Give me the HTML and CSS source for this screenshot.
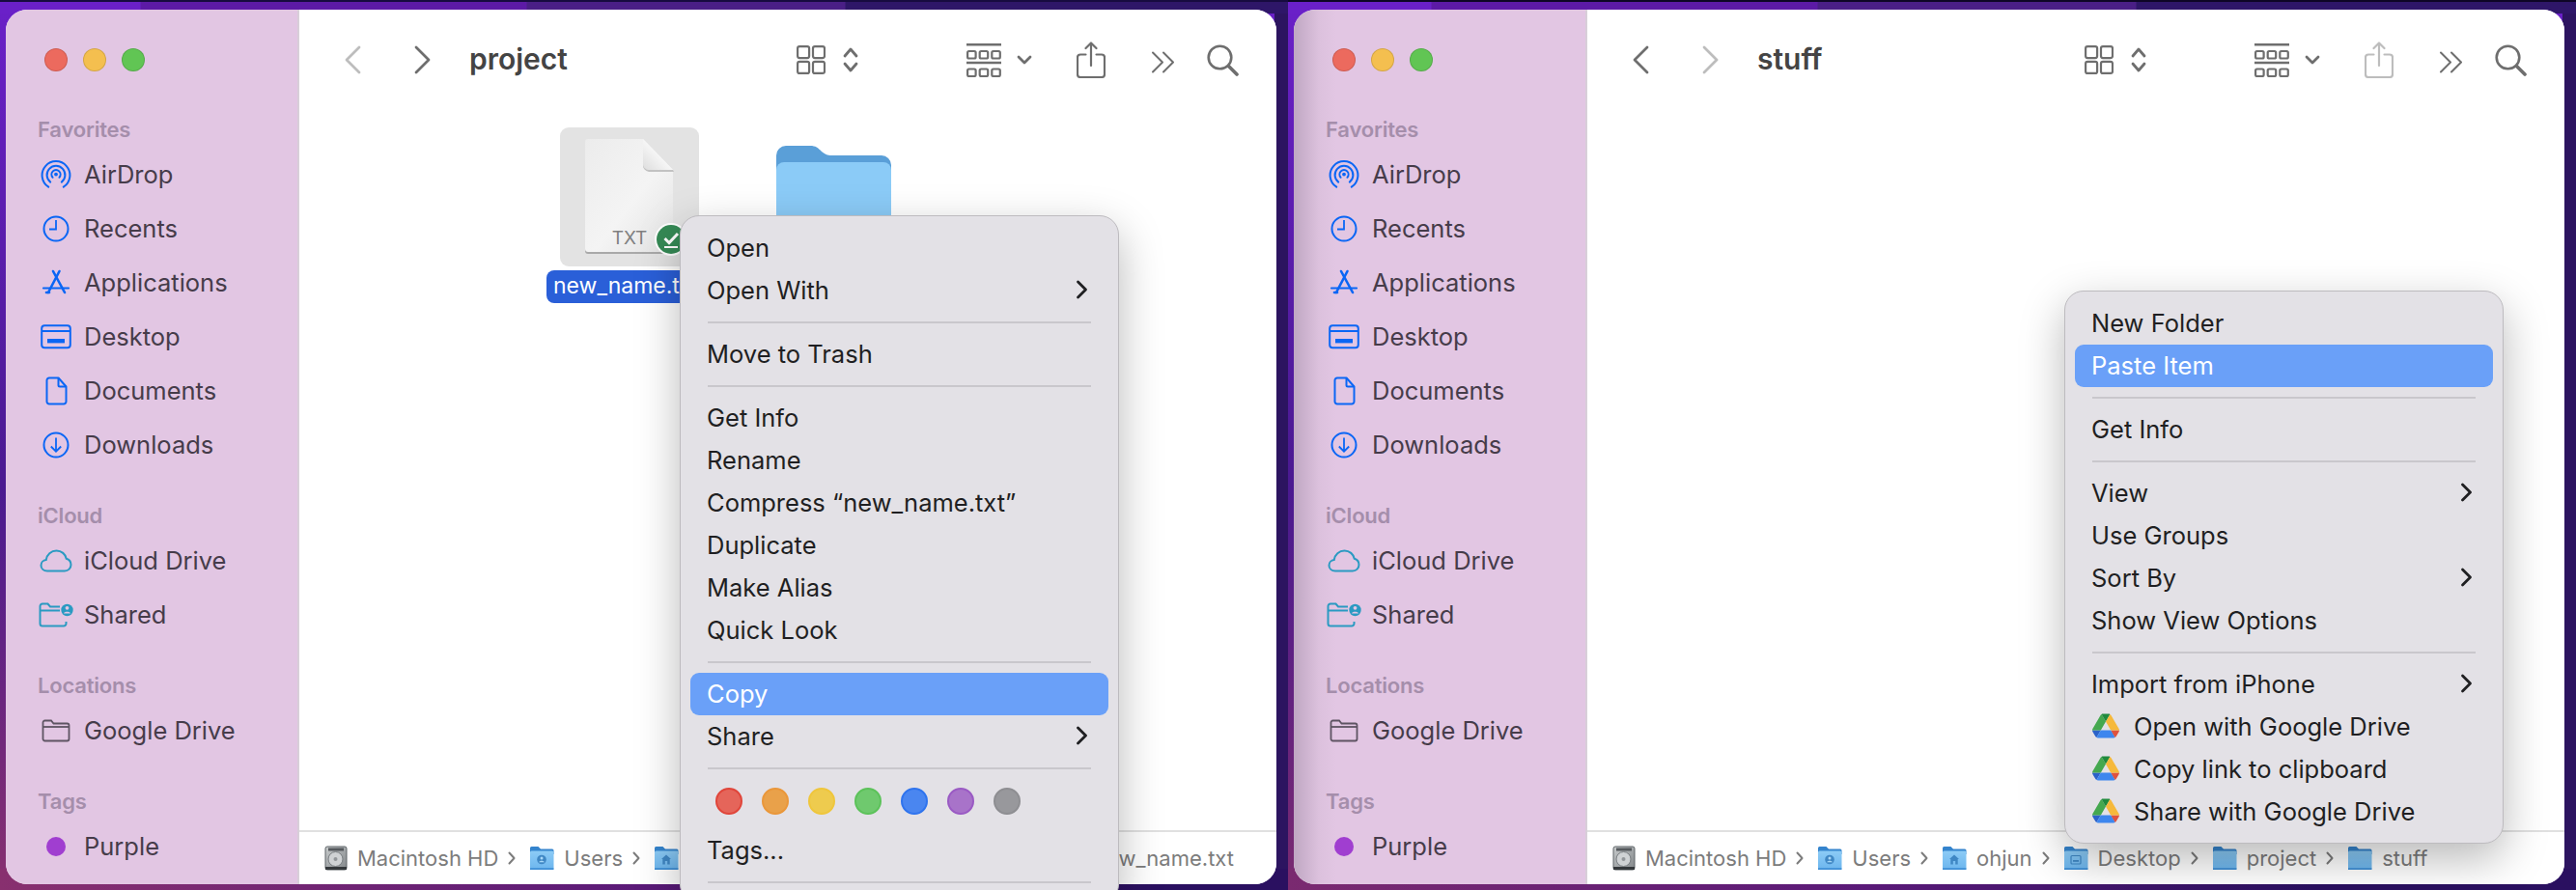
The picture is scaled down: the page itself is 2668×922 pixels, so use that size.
FILE: index.html
```html
<!DOCTYPE html>
<html lang="en">
<head>
<meta charset="utf-8">
<title>Finder copy and paste</title>
<link rel="stylesheet" href="styles.css">
</head>
<body>
<svg class="defs" aria-hidden="true">
  <defs>
    <linearGradient id="metal" x1="0" y1="0" x2="1" y2="1"><stop offset="0" stop-color="#c9cccd"/><stop offset=".5" stop-color="#a3a7a9"/><stop offset="1" stop-color="#84888b"/></linearGradient>
    <linearGradient id="fldbody" x1="0" y1="0" x2="0" y2="1"><stop offset="0" stop-color="#8ccbf6"/><stop offset="1" stop-color="#6db6ee"/></linearGradient>
  </defs>
  <symbol id="i-airdrop" viewBox="0 0 32 32"><g fill="none" stroke="currentColor" stroke-width="2" stroke-linecap="round"><path d="M8.200 28.600A14.400 14.400 0 1 1 23.800 28.600"/><path d="M10.200 23.600A9.400 9.400 0 1 1 21.800 23.600"/><path d="M12.600 18.800A4.600 4.600 0 1 1 19.400 18.800"/></g><circle cx="16" cy="15.600" r="1.900" fill="currentColor"/></symbol>
  <symbol id="i-clock" viewBox="0 0 32 32"><g fill="none" stroke="currentColor" stroke-width="2"><circle cx="16" cy="16" r="12.500"/><path d="M16 7v9.500H9" stroke-width="1.800"/></g></symbol>
  <symbol id="i-apps" viewBox="0 0 32 32"><g fill="none" stroke="currentColor" stroke-width="2.600" stroke-linecap="round"><path d="M19.500 4 8 26"/><path d="M13 4 25 26"/><path d="M3 21.500h26" stroke-width="2.200"/><path d="M6 26l3 0"/></g></symbol>
  <symbol id="i-desktop" viewBox="0 0 32 26"><g fill="none" stroke="currentColor" stroke-width="2"><rect x="1.200" y="1.200" width="29.600" height="23" rx="3"/><path d="M1.500 7h29"/></g><rect x="7" y="15" width="18" height="4.400" fill="currentColor"/></symbol>
  <symbol id="i-doc" viewBox="0 0 24 30"><g fill="none" stroke="currentColor" stroke-width="2" stroke-linejoin="round"><path d="M5 1.500h9.500l8 9V26a2.500 2.500 0 0 1-2.500 2.500H5A2.500 2.500 0 0 1 2.500 26V4A2.500 2.500 0 0 1 5 1.500z"/><path d="M14.500 1.500V9a1.500 1.500 0 0 0 1.500 1.500h6.500"/></g></symbol>
  <symbol id="i-down" viewBox="0 0 32 32"><g fill="none" stroke="currentColor" stroke-width="2"><circle cx="16" cy="16" r="12.500"/><path d="M16 8.500v14M10.800 17.500l5.200 5.200 5.200-5.200" stroke-width="1.800"/></g></symbol>
  <symbol id="i-cloud" viewBox="0 0 34 24"><path d="M8 22.500C4.200 22.500 1.500 20 1.500 16.700c0-3 2.200-5.300 5.200-5.600C7.400 5.500 12 1.500 17.500 1.500c5.300 0 9.300 3.600 10.200 8.300 2.900.8 4.800 3.300 4.800 6.300 0 3.600-2.800 6.400-6.600 6.400z" fill="none" stroke="currentColor" stroke-width="2"/></symbol>
  <symbol id="i-shared" viewBox="0 0 36 26"><g fill="none" stroke="currentColor" stroke-width="2"><path d="M22 4.500H12l-2.500-3H4A2.500 2.500 0 0 0 1.500 4v18A2.500 2.500 0 0 0 4 24.500h22a2.500 2.500 0 0 0 2.500-2.500v-2"/><path d="M1.500 8.500H22"/></g><circle cx="29.500" cy="8" r="6.200" fill="currentColor"/><circle cx="29.500" cy="5.800" r="1.900" fill="#e2c6e3"/><path d="M26 11.500c.4-2.400 6.600-2.400 7 0z" fill="#e2c6e3"/></symbol>
  <symbol id="i-folder-line" viewBox="0 0 30 24"><g fill="none" stroke="currentColor" stroke-width="1.800"><path d="M3.500 1.500h6.500l2.500 3H26.500a2 2 0 0 1 2 2V20.500a2 2 0 0 1-2 2H3.500a2 2 0 0 1-2-2V3.500a2 2 0 0 1 2-2z"/><path d="M1.500 8h27"/></g></symbol>
  <symbol id="i-prev" viewBox="0 0 18 30"><path d="M16 2 3 15l13 13" fill="none" stroke="currentColor" stroke-width="2.800" stroke-linecap="round" stroke-linejoin="round"/></symbol>
  <symbol id="i-next" viewBox="0 0 18 30"><path d="M2 2l13 13L2 28" fill="none" stroke="currentColor" stroke-width="2.800" stroke-linecap="round" stroke-linejoin="round"/></symbol>
  <symbol id="i-grid" viewBox="0 0 30 30"><g fill="none" stroke="currentColor" stroke-width="2.200"><rect x="1.100" y="1.100" width="12" height="12" rx="2"/><rect x="17" y="1.100" width="12" height="12" rx="2"/><rect x="1.100" y="16.900" width="12" height="12" rx="2"/><rect x="17" y="16.900" width="12" height="12" rx="2"/></g></symbol>
  <symbol id="i-updown" viewBox="0 0 16 28"><path d="M2 10l6-7 6 7M2 18l6 7 6-7" fill="none" stroke="currentColor" stroke-width="2.800" stroke-linecap="round" stroke-linejoin="round"/></symbol>
  <symbol id="i-group" viewBox="0 0 36 35"><g fill="none" stroke="currentColor" stroke-width="2.200"><path d="M0 1.300h36M0 20h36" stroke-width="2.400"/><rect x="1.100" y="8" width="8.500" height="7.500" rx="1.500"/><rect x="13.700" y="8" width="8.500" height="7.500" rx="1.500"/><rect x="26.300" y="8" width="8.500" height="7.500" rx="1.500"/><rect x="1.100" y="26.500" width="8.500" height="7.500" rx="1.500"/><rect x="13.700" y="26.500" width="8.500" height="7.500" rx="1.500"/><rect x="26.300" y="26.500" width="8.500" height="7.500" rx="1.500"/></g></symbol>
  <symbol id="i-caret" viewBox="0 0 16 10"><path d="M2 2l6 6 6-6" fill="none" stroke="currentColor" stroke-width="2.800" stroke-linecap="round" stroke-linejoin="round"/></symbol>
  <symbol id="i-share" viewBox="0 0 30 38"><g fill="none" stroke="currentColor" stroke-width="2.200" stroke-linecap="round" stroke-linejoin="round"><path d="M9.500 13.500H4a3 3 0 0 0-3 3V34a3 3 0 0 0 3 3h22a3 3 0 0 0 3-3V16.500a3 3 0 0 0-3-3h-5.500"/><path d="M15 25V1.500M9.500 7 15 1.500 20.500 7"/></g></symbol>
  <symbol id="i-more" viewBox="0 0 25 23"><path d="M2 1.500 12 11.500 2 21.500M13 1.500 23 11.500 13 21.500" fill="none" stroke="currentColor" stroke-width="2" stroke-linecap="round" stroke-linejoin="round"/></symbol>
  <symbol id="i-search" viewBox="0 0 33 33"><g fill="none" stroke="currentColor" stroke-linecap="round"><circle cx="13.500" cy="13.500" r="11.800" stroke-width="2.600"/><path d="M22.500 22.500l8.500 8.500" stroke-width="3.600"/></g></symbol>
  <symbol id="i-chev" viewBox="0 0 13 20"><path d="M2.500 2l8 8-8 8" fill="none" stroke="currentColor" stroke-width="2.800" stroke-linecap="round" stroke-linejoin="round"/></symbol>
  <symbol id="i-crumb" viewBox="0 0 8 14"><path d="M1.500 1.500 6.500 7l-5 5.500" fill="none" stroke="currentColor" stroke-width="2" stroke-linecap="round" stroke-linejoin="round"/></symbol>
  <symbol id="i-drive" viewBox="0 0 87.300 78"><path d="m6.600 66.850 3.850 6.650c.8 1.400 1.950 2.500 3.300 3.300l13.750-23.800h-27.500c0 1.550.4 3.100 1.200 4.500z" fill="#2b62c8"/><path d="m43.650 25-13.750-23.800c-1.350.8-2.500 1.900-3.300 3.300l-25.400 44a9.060 9.060 0 0 0 -1.200 4.500h27.500z" fill="#45a84f"/><path d="m73.550 76.800c1.350-.8 2.500-1.900 3.300-3.300l1.600-2.750 7.650-13.250c.8-1.400 1.200-2.950 1.200-4.500h-27.502l5.852 11.500z" fill="#e0523e"/><path d="m43.650 25 13.750-23.800c-1.350-.8-2.900-1.200-4.500-1.200h-18.500c-1.600 0-3.150.45-4.500 1.200z" fill="#1f8a3d"/><path d="m59.800 53h-32.300l-13.750 23.800c1.350.8 2.900 1.200 4.500 1.200h50.800c1.600 0 3.150-.45 4.500-1.200z" fill="#3d86ee"/><path d="m73.400 26.500-12.700-22c-.8-1.400-1.950-2.500-3.300-3.300l-13.750 23.800 16.150 28h27.450c0-1.550-.4-3.100-1.200-4.500z" fill="#f6b93b"/></symbol>
  <symbol id="i-hd" viewBox="0 0 24 26"><rect x="1" y="1" width="22" height="24" rx="2" fill="url(#metal)" stroke="#5f6468"/><rect x="4" y="2.500" width="16" height="3" fill="#55595d"/><circle cx="11.500" cy="14" r="7.500" fill="#cfd2d4" stroke="#787d81"/><circle cx="11.500" cy="14" r="2" fill="#92969a"/><rect x="1" y="22" width="22" height="3" fill="#34383b"/></symbol>
  <symbol id="i-fld" viewBox="0 0 26 26"><path d="M1 2.500A1.500 1.500 0 0 1 2.500 1h7L12 3.500h12A1.500 1.500 0 0 1 25.500 5v4H1z" fill="#3484cd"/><rect x="1" y="5.500" width="24.500" height="19" rx="1.500" fill="url(#fldbody)"/><rect x="1" y="23.200" width="24.500" height="1.800" fill="#3f8fd6"/></symbol>
  <symbol id="i-fld-user" viewBox="0 0 26 26"><use href="#i-fld"/><circle cx="13" cy="14.500" r="4.800" fill="#3f87c4"/><circle cx="13" cy="13.100" r="1.500" fill="#a8d8f8"/><path d="M10.200 17.300c.6-2 5-2 5.600 0z" fill="#a8d8f8"/></symbol>
  <symbol id="i-fld-home" viewBox="0 0 26 26"><use href="#i-fld"/><path d="M13 9.500l5 4.500h-1.300v5.500h-2.500V16h-2.400v3.500H9.300V14H8z" fill="#3f87c4"/></symbol>
  <symbol id="i-fld-desk" viewBox="0 0 26 26"><use href="#i-fld"/><rect x="8" y="10.500" width="10" height="8.500" rx="1" fill="none" stroke="#3f87c4" stroke-width="1.200"/><rect x="10" y="15" width="6" height="1.800" fill="#3f87c4"/></symbol>
  <symbol id="i-txt" viewBox="0 0 26 26"><path d="M5 1h11l6 6v18H5z" fill="#f4f4f4" stroke="#c8c8c8"/></symbol>
</svg>

<div class="screen">
  <section class="panel">
    <div class="window">
      <aside class="sidebar">
        <div class="lights"><span class="light red"></span><span class="light yellow"></span><span class="light green"></span></div>
        <div class="side-group side-group-first">
          <h2 class="side-head">Favorites</h2>
          <div class="side-row"><span class="side-icon blue"><svg width="32" height="32"><use href="#i-airdrop"/></svg></span>AirDrop</div>
          <div class="side-row"><span class="side-icon blue"><svg width="32" height="32"><use href="#i-clock"/></svg></span>Recents</div>
          <div class="side-row"><span class="side-icon blue"><svg width="32" height="32"><use href="#i-apps"/></svg></span>Applications</div>
          <div class="side-row"><span class="side-icon blue"><svg width="32" height="26"><use href="#i-desktop"/></svg></span>Desktop</div>
          <div class="side-row"><span class="side-icon blue"><svg width="24" height="30"><use href="#i-doc"/></svg></span>Documents</div>
          <div class="side-row"><span class="side-icon blue"><svg width="32" height="32"><use href="#i-down"/></svg></span>Downloads</div>
        </div>
        <div class="side-group">
          <h2 class="side-head">iCloud</h2>
          <div class="side-row"><span class="side-icon teal"><svg width="34" height="24"><use href="#i-cloud"/></svg></span>iCloud Drive</div>
          <div class="side-row"><span class="side-icon teal"><svg width="36" height="26"><use href="#i-shared"/></svg></span>Shared</div>
        </div>
        <div class="side-group">
          <h2 class="side-head">Locations</h2>
          <div class="side-row"><span class="side-icon slate"><svg width="30" height="24"><use href="#i-folder-line"/></svg></span>Google Drive</div>
        </div>
        <div class="side-group">
          <h2 class="side-head">Tags</h2>
          <div class="side-row"><span class="side-icon"><span class="tag-dot"></span></span>Purple</div>
        </div>
      </aside>
      <div class="main">
        <header class="toolbar">
          <svg class="t-back dim" width="18" height="30"><use href="#i-prev"/></svg>
          <svg class="t-forward" width="18" height="30"><use href="#i-next"/></svg>
          <h1 class="title">project</h1>
          <div class="tools">
            <svg width="30" height="30"><use href="#i-grid"/></svg>
            <svg class="t-updown" width="16" height="28"><use href="#i-updown"/></svg>
            <svg class="t-group" width="36" height="35"><use href="#i-group"/></svg>
            <svg class="t-caret" width="16" height="10"><use href="#i-caret"/></svg>
            <svg class="t-share" width="30" height="38"><use href="#i-share"/></svg>
            <svg class="t-more" width="25" height="23"><use href="#i-more"/></svg>
            <svg class="t-search" width="33" height="33"><use href="#i-search"/></svg>
          </div>
        </header>
        <div class="files">
          <figure class="file">
            <div class="tile">
              <div class="doc">
                <svg class="doc-art" width="92" height="120" viewBox="0 0 92 120">
                  <defs>
                    <linearGradient id="paper" x1="0" y1="0" x2="1" y2="1"><stop offset="0" stop-color="#ececec"/><stop offset=".55" stop-color="#f4f4f4"/><stop offset="1" stop-color="#e2e2e2"/></linearGradient>
                    <linearGradient id="fold" x1="0" y1="1" x2="1" y2="0"><stop offset="0" stop-color="#dddddd"/><stop offset=".6" stop-color="#fbfbfb"/></linearGradient>
                  </defs>
                  <path d="M3 1h57l31 32v82a3 3 0 0 1-3 3H3a3 3 0 0 1-3-3V4a3 3 0 0 1 3-3z" fill="url(#paper)"/>
                  <path d="M0 115a3 3 0 0 0 3 3h85a3 3 0 0 0 3-3v2a3 3 0 0 1-3 3H3a3 3 0 0 1-3-3z" fill="#a9a9a9"/>
                  <path d="M60 1l31 32H66a6 6 0 0 1-6-6z" fill="url(#fold)"/>
                  <path d="M60 27a6 6 0 0 0 6 6h25l1 2H66a7 7 0 0 1-6-8z" fill="#c2c2c2"/>
                </svg>
                <span class="doc-ext">TXT</span>
                <span class="badge"><svg width="30" height="30" viewBox="0 0 30 30"><circle cx="15" cy="15" r="15" fill="#358a55"/><path d="M8.500 14l4.500 4.500L22 9" fill="none" stroke="#fff" stroke-width="3"/><path d="M8 23h14" stroke="#fff" stroke-width="2"/></svg></span>
              </div>
            </div>
            <figcaption class="file-name">new_name.txt</figcaption>
          </figure>
          <div class="folder">
            <svg width="119" height="100" viewBox="0 0 119 100"><path d="M0 10a10 10 0 0 1 10-10h25c6 0 8 2 12 6 5 4 7 4 12 4h50a10 10 0 0 1 10 10v70H0z" fill="#5a9fd8"/><path d="M0 25a8 8 0 0 1 8-8h103a8 8 0 0 1 8 8v75H0z" fill="#8bcbf7"/></svg>
          </div>
        </div>
        <footer class="path">
          <span class="crumb"><svg class="crumb-icon" width="24" height="26"><use href="#i-hd"/></svg>Macintosh HD</span>
          <svg class="sep-icon" width="8" height="14"><use href="#i-crumb"/></svg>
          <span class="crumb"><svg class="crumb-icon" width="26" height="26"><use href="#i-fld-user"/></svg>Users</span>
          <svg class="sep-icon" width="8" height="14"><use href="#i-crumb"/></svg>
          <span class="crumb"><svg class="crumb-icon" width="26" height="26"><use href="#i-fld-home"/></svg>ohjun</span>
          <svg class="sep-icon" width="8" height="14"><use href="#i-crumb"/></svg>
          <span class="crumb"><svg class="crumb-icon" width="26" height="26"><use href="#i-fld-desk"/></svg>Desktop</span>
          <svg class="sep-icon" width="8" height="14"><use href="#i-crumb"/></svg>
          <span class="crumb"><svg class="crumb-icon" width="26" height="26"><use href="#i-fld"/></svg>project</span>
          <svg class="sep-icon" width="8" height="14"><use href="#i-crumb"/></svg>
          <span class="crumb"><svg class="crumb-icon" width="26" height="26"><use href="#i-txt"/></svg>new_name.txt</span>
        </footer>
      </div>
    </div>
    <nav class="menu menu-file">
      <div class="item">Open</div>
      <div class="item">Open With<svg class="chev" width="13" height="20"><use href="#i-chev"/></svg></div>
      <hr class="rule">
      <div class="item">Move to Trash</div>
      <hr class="rule">
      <div class="item">Get Info</div>
      <div class="item">Rename</div>
      <div class="item">Compress “new_name.txt”</div>
      <div class="item">Duplicate</div>
      <div class="item">Make Alias</div>
      <div class="item">Quick Look</div>
      <hr class="rule">
      <div class="item active">Copy</div>
      <div class="item">Share<svg class="chev" width="13" height="20"><use href="#i-chev"/></svg></div>
      <hr class="rule">
      <div class="tag-row"><span class="tag t-red"></span><span class="tag t-orange"></span><span class="tag t-yellow"></span><span class="tag t-green"></span><span class="tag t-blue"></span><span class="tag t-purple"></span><span class="tag t-gray"></span></div>
      <div class="item">Tags...</div>
      <hr class="rule">
    </nav>
  </section>

  <section class="panel panel-second">
    <div class="window">
      <aside class="sidebar sidebar-shaded">
        <div class="lights"><span class="light red"></span><span class="light yellow"></span><span class="light green"></span></div>
        <div class="side-group side-group-first">
          <h2 class="side-head">Favorites</h2>
          <div class="side-row"><span class="side-icon blue"><svg width="32" height="32"><use href="#i-airdrop"/></svg></span>AirDrop</div>
          <div class="side-row"><span class="side-icon blue"><svg width="32" height="32"><use href="#i-clock"/></svg></span>Recents</div>
          <div class="side-row"><span class="side-icon blue"><svg width="32" height="32"><use href="#i-apps"/></svg></span>Applications</div>
          <div class="side-row"><span class="side-icon blue"><svg width="32" height="26"><use href="#i-desktop"/></svg></span>Desktop</div>
          <div class="side-row"><span class="side-icon blue"><svg width="24" height="30"><use href="#i-doc"/></svg></span>Documents</div>
          <div class="side-row"><span class="side-icon blue"><svg width="32" height="32"><use href="#i-down"/></svg></span>Downloads</div>
        </div>
        <div class="side-group">
          <h2 class="side-head">iCloud</h2>
          <div class="side-row"><span class="side-icon teal"><svg width="34" height="24"><use href="#i-cloud"/></svg></span>iCloud Drive</div>
          <div class="side-row"><span class="side-icon teal"><svg width="36" height="26"><use href="#i-shared"/></svg></span>Shared</div>
        </div>
        <div class="side-group">
          <h2 class="side-head">Locations</h2>
          <div class="side-row"><span class="side-icon slate"><svg width="30" height="24"><use href="#i-folder-line"/></svg></span>Google Drive</div>
        </div>
        <div class="side-group">
          <h2 class="side-head">Tags</h2>
          <div class="side-row"><span class="side-icon"><span class="tag-dot"></span></span>Purple</div>
        </div>
      </aside>
      <div class="main">
        <header class="toolbar">
          <svg class="t-back" width="18" height="30"><use href="#i-prev"/></svg>
          <svg class="t-forward dim" width="18" height="30"><use href="#i-next"/></svg>
          <h1 class="title">stuff</h1>
          <div class="tools">
            <svg width="30" height="30"><use href="#i-grid"/></svg>
            <svg class="t-updown" width="16" height="28"><use href="#i-updown"/></svg>
            <svg class="t-group" width="36" height="35"><use href="#i-group"/></svg>
            <svg class="t-caret" width="16" height="10"><use href="#i-caret"/></svg>
            <svg class="t-share dim" width="30" height="38"><use href="#i-share"/></svg>
            <svg class="t-more" width="25" height="23"><use href="#i-more"/></svg>
            <svg class="t-search" width="33" height="33"><use href="#i-search"/></svg>
          </div>
        </header>
        <div class="files"></div>
        <footer class="path">
          <span class="crumb"><svg class="crumb-icon" width="24" height="26"><use href="#i-hd"/></svg>Macintosh HD</span>
          <svg class="sep-icon" width="8" height="14"><use href="#i-crumb"/></svg>
          <span class="crumb"><svg class="crumb-icon" width="26" height="26"><use href="#i-fld-user"/></svg>Users</span>
          <svg class="sep-icon" width="8" height="14"><use href="#i-crumb"/></svg>
          <span class="crumb"><svg class="crumb-icon" width="26" height="26"><use href="#i-fld-home"/></svg>ohjun</span>
          <svg class="sep-icon" width="8" height="14"><use href="#i-crumb"/></svg>
          <span class="crumb"><svg class="crumb-icon" width="26" height="26"><use href="#i-fld-desk"/></svg>Desktop</span>
          <svg class="sep-icon" width="8" height="14"><use href="#i-crumb"/></svg>
          <span class="crumb"><svg class="crumb-icon" width="26" height="26"><use href="#i-fld"/></svg>project</span>
          <svg class="sep-icon" width="8" height="14"><use href="#i-crumb"/></svg>
          <span class="crumb"><svg class="crumb-icon" width="26" height="26"><use href="#i-fld"/></svg>stuff</span>
        </footer>
      </div>
    </div>
    <nav class="menu menu-folder">
      <div class="item">New Folder</div>
      <div class="item active">Paste Item</div>
      <hr class="rule">
      <div class="item">Get Info</div>
      <hr class="rule">
      <div class="item">View<svg class="chev" width="13" height="20"><use href="#i-chev"/></svg></div>
      <div class="item">Use Groups</div>
      <div class="item">Sort By<svg class="chev" width="13" height="20"><use href="#i-chev"/></svg></div>
      <div class="item">Show View Options</div>
      <hr class="rule">
      <div class="item">Import from iPhone<svg class="chev" width="13" height="20"><use href="#i-chev"/></svg></div>
      <div class="item item-drive"><svg class="drive" width="28" height="26"><use href="#i-drive"/></svg>Open with Google Drive</div>
      <div class="item item-drive"><svg class="drive" width="28" height="26"><use href="#i-drive"/></svg>Copy link to clipboard</div>
      <div class="item item-drive"><svg class="drive" width="28" height="26"><use href="#i-drive"/></svg>Share with Google Drive</div>
    </nav>
  </section>
</div>
</body>
</html>
```

FILE: styles.css
```css
* { box-sizing: border-box; }

html, body {
  margin: 0;
  height: 922px;
  overflow: hidden;
  background: #2c1460;
  font-family: Inter, "Liberation Sans", sans-serif;
}

.defs { position: absolute; width: 0; height: 0; }

svg { display: block; flex: none; }

.screen { display: flex; width: 2668px; height: 922px; }

.panel {
  position: relative;
  width: 1334px;
  height: 922px;
  padding: 10px 12px 6px 6px;
  overflow: hidden;
  background:
    linear-gradient(#170b40, #170b40) top / 100% 2px no-repeat,
    linear-gradient(to right, #6a20c8 0, #6a20c8 145px, #5c1aa6 146px, #5c1aa6 545px, #4a1f86 546px, #4a1f86 875px, #2e1668 876px, #2e1668 100%) top / 100% 14px no-repeat,
    linear-gradient(to right, #88306f 0, #5a1a78 50%, #2a1060 90%, #2a1060 100%) bottom / 100% 22px no-repeat,
    linear-gradient(#2c1460, #2c1460) right / 14px 100% no-repeat,
    linear-gradient(to bottom, #6a20c8 0, #4a1a90 55%, #88306f 100%);
}

.panel-second {
  background:
    linear-gradient(#0e0626, #0e0626) top / 100% 2px no-repeat,
    linear-gradient(to right, #6a20c8 0, #6a20c8 148px, #5c1aa6 149px, #5c1aa6 548px, #4a1f86 549px, #4a1f86 878px, #2e1668 879px, #2e1668 100%) top / 100% 14px no-repeat,
    linear-gradient(to right, #7a2a70 0, #5a1a78 45%, #2a1060 80%, #2a1060 100%) bottom / 100% 22px no-repeat,
    linear-gradient(#2c1460, #2c1460) right / 14px 100% no-repeat,
    linear-gradient(to bottom, #6a20c8 0, #4a1a90 55%, #7a2a70 100%);
}

.window {
  display: flex;
  width: 1316px;
  height: 906px;
  border-radius: 22px;
  background: #fff;
}

.sidebar {
  width: 304px;
  flex: none;
  padding-top: 40px;
  background: #e2c6e3;
  border-right: 2px solid #d8ced9;
  border-radius: 22px 0 0 22px;
}

.sidebar-shaded {
  background: linear-gradient(to right, #bfa7c2 0, #dcc1dd 26px, #e2c6e3 44px);
}

.lights { display: flex; gap: 16px; padding-left: 40px; }

.light {
  width: 24px;
  height: 24px;
  border-radius: 50%;
  border: 1px solid rgba(0, 0, 0, .13);
}
.red { background: #ec6a5e; }
.yellow { background: #f4bf4f; }
.green { background: #61c554; }

.side-group { margin-top: 26px; }
.side-group-first { margin-top: 41px; }

.side-head {
  margin: 0;
  padding-left: 33px;
  font-size: 22px;
  font-weight: 600;
  line-height: 38px;
  color: #a58eab;
  letter-spacing: -.2px;
}

.side-row {
  display: flex;
  align-items: center;
  height: 56px;
  padding: 0 0 2px 34px;
  font-size: 25.500px;
  color: #463c4a;
}

.side-icon {
  display: flex;
  align-items: center;
  justify-content: center;
  width: 36px;
  margin: 2px 11px 0 0;
}
.blue { color: #0a66f5; }
.teal { color: #2a9ac2; }
.slate { color: #5e5463; }

.tag-dot {
  width: 20px;
  height: 20px;
  border-radius: 50%;
  background: #a03ed0;
}

.main {
  display: flex;
  flex: 1;
  flex-direction: column;
  min-width: 0;
  border-radius: 0 22px 22px 0;
  background: #fff;
}

.toolbar {
  display: flex;
  align-items: center;
  flex: none;
  height: 104px;
  padding-left: 46px;
  color: #6e6e6e;
}

.dim { color: #bdbdbd; }

.t-forward { margin-left: 55px; }

.title {
  margin: 0 0 3px 39px;
  font-size: 30px;
  font-weight: 600;
  color: #444;
}

.tools {
  display: flex;
  align-items: center;
  margin-left: auto;
  padding-right: 39px;
}
.t-updown { margin-left: 18px; }
.t-group { margin-left: 112px; }
.t-caret { margin-left: 16px; }
.t-share { margin-left: 46px; }
.t-more { margin-left: 47px; margin-top: 4px; }
.t-search { margin-left: 33px; }

.files {
  display: flex;
  flex: 1;
  gap: 53px;
  padding: 18px 0 0 256px;
  overflow: hidden;
}

.file {
  display: flex;
  flex-direction: column;
  align-items: center;
  width: 172px;
  margin: 0;
}

.tile {
  display: flex;
  justify-content: center;
  width: 144px;
  height: 144px;
  padding-top: 11px;
  border-radius: 9px;
  background: #e3e3e3;
}

.doc { position: relative; width: 92px; height: 120px; }

.doc-ext {
  position: absolute;
  left: 0;
  right: 0;
  bottom: 4px;
  text-align: center;
  font-size: 19px;
  line-height: 24px;
  color: #808080;
}

.badge {
  position: absolute;
  left: 72px;
  top: 88px;
  padding: 2px;
  border-radius: 50%;
  background: #fff;
}

.file-name {
  width: 172px;
  height: 34px;
  margin-top: 4px;
  padding-left: 7px;
  border-radius: 8px;
  background: #2a5fd8;
  color: #fff;
  font-size: 23px;
  line-height: 32px;
  white-space: nowrap;
}

.folder { width: 144px; padding: 19px 0 0 13px; }

.path {
  display: flex;
  align-items: center;
  flex: none;
  height: 56px;
  padding-left: 26px;
  border-top: 2px solid #e0e0e0;
  color: #7c7c7c;
  font-size: 22px;
  white-space: nowrap;
  overflow: hidden;
  border-radius: 0 0 22px 0;
}

.crumb { display: flex; align-items: center; }
.crumb-icon { margin-right: 10px; }
.sep-icon { margin: 0 14px 0 10px; color: #7c7c7c; }

.menu {
  position: absolute;
  width: 455px;
  padding: 11px 0 10px;
  border: 1px solid #bdbbbf;
  border-radius: 20px;
  background: #e3e1e6;
  box-shadow: 0 16px 46px rgba(0, 0, 0, .28);
  color: #1f1f22;
  font-size: 25.500px;
}
.menu-file { left: 704px; top: 223px; }
.menu-folder { left: 804px; top: 301px; }

.item {
  display: flex;
  align-items: center;
  justify-content: space-between;
  height: 44px;
  margin: 0 10px;
  padding: 0 21px 2px 17px;
  border-radius: 9px;
}
.active { background: #6aa0f8; color: #fff; }
.item-drive { justify-content: flex-start; }
.drive { margin: 0 15px 0 1px; }
.chev { color: #1f1f22; }

.rule {
  height: 2px;
  margin: 10px 28px;
  border: 0;
  background: #c9c7cc;
}

.tag-row {
  display: flex;
  gap: 20px;
  height: 52px;
  padding: 9px 0 0 36px;
}
.tag { width: 28px; height: 28px; border-radius: 50%; border: 2px solid; }
.t-red { background: #e5655a; border-color: #e0453a; }
.t-orange { background: #e9a14a; border-color: #ea973a; }
.t-yellow { background: #eecb4e; border-color: #efc63c; }
.t-green { background: #6fc96e; border-color: #5cc25a; }
.t-blue { background: #4a86f0; border-color: #2f74ee; }
.t-purple { background: #a873c9; border-color: #9a5ac4; }
.t-gray { background: #98989c; border-color: #8e8e92; }
```
